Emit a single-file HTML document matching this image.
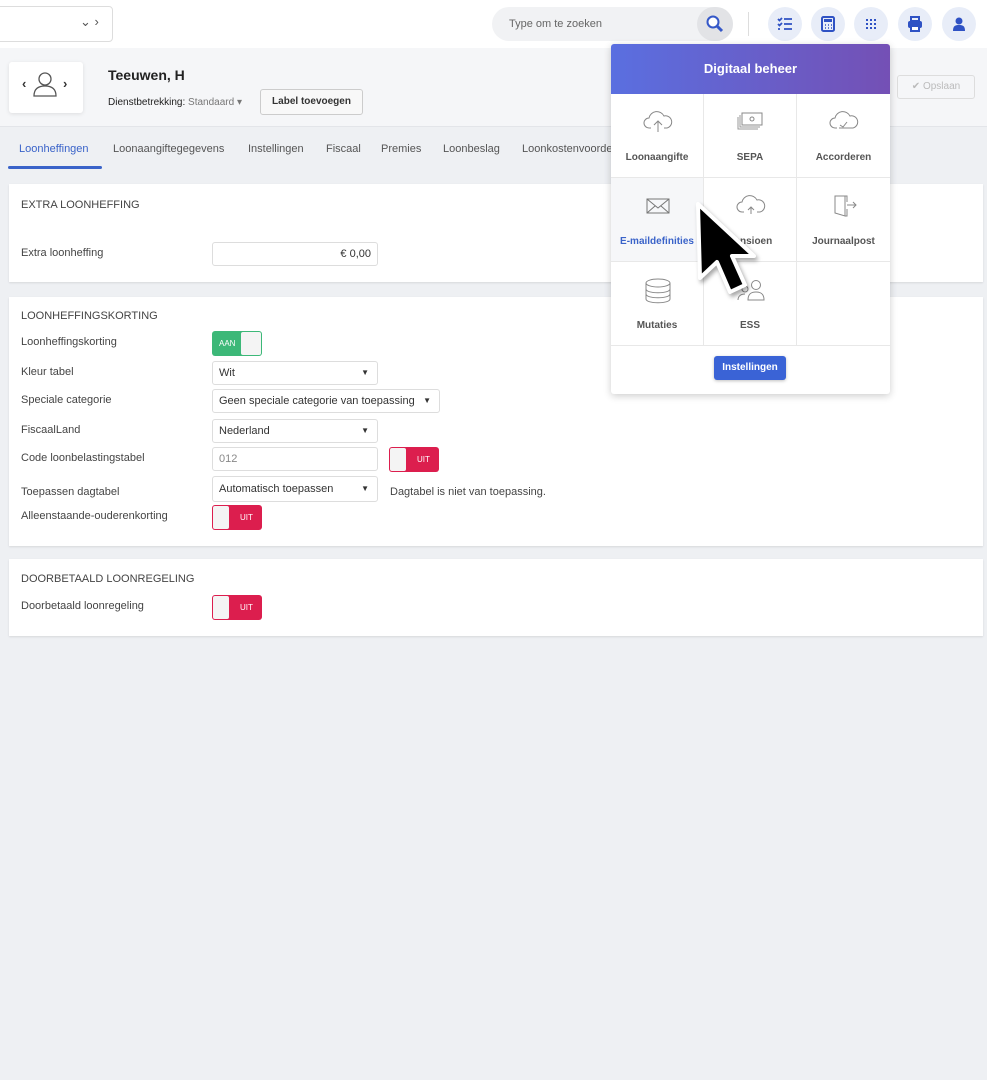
<!DOCTYPE html>
<html><head><meta charset="utf-8"><style>
*{box-sizing:border-box;margin:0;padding:0}
body{width:987px;height:1080px;background:#eef0f3;font-family:"Liberation Sans",sans-serif;color:#333;position:relative;overflow:hidden;font-size:11px}
.a{position:absolute}
.top{left:0;top:0;width:987px;height:48px;background:#fff;box-shadow:0 2px 4px rgba(0,0,0,.08)}
.circ{width:34px;height:34px;border-radius:50%;background:#e8edf8;top:7px;display:flex;align-items:center;justify-content:center}
.card{background:#fff;left:9px;width:974px;box-shadow:0 1px 2px rgba(0,0,0,.1)}
.lbl{left:21px;font-size:11px;color:#444}
.inp{left:212px;height:24px;border:1px solid #ddd;border-radius:3px;background:#fff;font-size:11px;color:#333;padding:0 6px;line-height:22px}
.sel:after{content:"▼";position:absolute;right:8px;top:0;font-size:8px;color:#333}
.tg{width:50px;height:25px;border-radius:3px}
.on{background:#3cb878;color:#fff;font-size:8px}
.on span{position:absolute;left:7px;top:8px}
.on i{position:absolute;right:1px;top:1px;width:20px;height:23px;background:#f4f4f4;border-radius:2px}
.off{background:#dc1e4e;color:#fff;font-size:8px}
.off span{position:absolute;left:28px;top:8px}
.off i{position:absolute;left:1px;top:1px;width:16px;height:23px;background:#f4f4f4;border-radius:2px}
.h{left:21px;font-size:11px;color:#444}
.cell{width:93px;height:84px;border-right:1px solid #e8e8e8;border-bottom:1px solid #e8e8e8;text-align:center}
.cell b{position:absolute;left:0;right:0;top:58px;font-size:10px;color:#555;font-weight:bold}
.cell svg{position:absolute;left:32px;top:16px}
</style></head><body>
<div class="a top"></div>
<div class="a" style="left:-5px;top:6px;width:118px;height:36px;border:1px solid #ddd;border-radius:4px;background:#fff"></div>
<div class="a" style="left:80px;top:14px;font-size:13px;color:#555">⌄ ›</div>
<div class="a" style="left:492px;top:7px;width:241px;height:34px;border-radius:17px;background:#f1f2f4"></div>
<div class="a" style="left:509px;top:18px;font-size:11px;color:#666">Type om te zoeken</div>
<div class="a" style="left:697px;top:7px;width:36px;height:34px;border-radius:17px;background:#e2e3e6"></div>
<svg class="a" style="left:705px;top:14px" width="20" height="20"><circle cx="8" cy="8" r="5.5" fill="#fff" stroke="#3558c8" stroke-width="2"/><path d="M12 12l5 5" stroke="#3558c8" stroke-width="3"/></svg>
<div class="a" style="left:748px;top:12px;width:1px;height:24px;background:#ddd"></div>
<div class="a circ" style="left:768px"><svg width="16" height="14"><path d="M1 2l1.5 1.5L5 1M1 7l1.5 1.5L5 6M1 12h2M7 2h8M7 7h8M7 12h8" stroke="#2f52c4" stroke-width="1.8" fill="none"/></svg></div>
<div class="a circ" style="left:811px"><svg width="14" height="16"><rect x="1" y="1" width="12" height="14" rx="1.5" fill="none" stroke="#2f52c4" stroke-width="2"/><rect x="3" y="3" width="8" height="3" fill="#2f52c4"/><path d="M4 9h1M7 9h1M10 9h1M4 12h1M7 12h1M10 12h1" stroke="#2f52c4" stroke-width="1.5"/></svg></div>
<div class="a circ" style="left:854px"><svg width="10" height="10" fill="#2f52c4"><rect x="0" y="0" width="2" height="2"/><rect x="4" y="0" width="2" height="2"/><rect x="8" y="0" width="2" height="2"/><rect x="0" y="4" width="2" height="2"/><rect x="4" y="4" width="2" height="2"/><rect x="8" y="4" width="2" height="2"/><rect x="0" y="8" width="2" height="2"/><rect x="4" y="8" width="2" height="2"/><rect x="8" y="8" width="2" height="2"/></svg></div>
<div class="a circ" style="left:898px"><svg width="16" height="16"><rect x="4" y="1" width="8" height="4" fill="none" stroke="#2f52c4" stroke-width="2"/><rect x="1" y="5" width="14" height="7" rx="2" fill="#2f52c4"/><rect x="4" y="10" width="8" height="5" fill="#fff" stroke="#2f52c4" stroke-width="2"/></svg></div>
<div class="a circ" style="left:942px"><svg width="12" height="14" fill="#2f52c4"><circle cx="6" cy="4" r="3.5"/><path d="M0 14c0-5 2-6 6-6s6 1 6 6z"/></svg></div>

<div class="a" style="left:0;top:48px;width:987px;height:79px;background:#f5f6f8;border-bottom:1px solid #e3e5e9"></div>
<div class="a" style="left:9px;top:62px;width:74px;height:51px;background:#fff;border-radius:3px;box-shadow:0 1px 4px rgba(0,0,0,.1)"></div>
<div class="a" style="left:22px;top:76px;font-size:13px;font-weight:bold">‹</div>
<div class="a" style="left:63px;top:76px;font-size:13px;font-weight:bold">›</div>
<svg class="a" style="left:32px;top:70px" width="26" height="28"><circle cx="13" cy="9" r="6" fill="none" stroke="#555" stroke-width="1.3"/><path d="M2 26c0-7 4-10 11-10s11 3 11 10z" fill="none" stroke="#555" stroke-width="1.3"/></svg>
<div class="a" style="left:108px;top:67px;font-size:14px;font-weight:bold;color:#222">Teeuwen, H</div>
<div class="a" style="left:108px;top:97px;font-size:10px;color:#222">Dienstbetrekking: <span style="color:#777">Standaard ▾</span></div>
<div class="a" style="left:260px;top:89px;width:103px;height:26px;border:1px solid #ccc;border-radius:3px;background:#f8f8f8;font-size:10px;text-align:center;line-height:24px;color:#333;font-weight:bold">Label toevoegen</div>
<div class="a" style="left:897px;top:75px;width:78px;height:24px;border:1px solid #ddd;border-radius:3px;font-size:10px;color:#bbb;text-align:center;line-height:22px">✔ Opslaan</div>

<div class="a" style="top:143px;left:19px;font-size:11px;color:#3a63c9">Loonheffingen</div>
<div class="a" style="top:143px;left:113px;font-size:11px;color:#555">Loonaangiftegegevens</div>
<div class="a" style="top:143px;left:248px;font-size:11px;color:#555">Instellingen</div>
<div class="a" style="top:143px;left:326px;font-size:11px;color:#555">Fiscaal</div>
<div class="a" style="top:143px;left:381px;font-size:11px;color:#555">Premies</div>
<div class="a" style="top:143px;left:443px;font-size:11px;color:#555">Loonbeslag</div>
<div class="a" style="top:143px;left:522px;font-size:11px;color:#555">Loonkostenvoordelen</div>
<div class="a" style="top:166px;left:8px;width:94px;height:3px;background:#3a63c9;border-radius:2px"></div>

<div class="a card" style="top:184px;height:98px"></div>
<div class="a h" style="top:199px">EXTRA LOONHEFFING</div>
<div class="a lbl" style="top:247px">Extra loonheffing</div>
<div class="a inp" style="top:242px;width:166px;text-align:right">€ 0,00</div>

<div class="a card" style="top:297px;height:249px"></div>
<div class="a h" style="top:310px">LOONHEFFINGSKORTING</div>
<div class="a lbl" style="top:336px">Loonheffingskorting</div>
<div class="a tg on" style="left:212px;top:331px"><span>AAN</span><i></i></div>
<div class="a lbl" style="top:366px">Kleur tabel</div>
<div class="a inp sel" style="top:361px;width:166px">Wit</div>
<div class="a lbl" style="top:394px">Speciale categorie</div>
<div class="a inp sel" style="top:389px;width:228px">Geen speciale categorie van toepassing</div>
<div class="a lbl" style="top:424px">FiscaalLand</div>
<div class="a inp sel" style="top:419px;width:166px">Nederland</div>
<div class="a lbl" style="top:452px">Code loonbelastingstabel</div>
<div class="a inp" style="top:447px;width:166px;color:#888">012</div>
<div class="a tg off" style="left:389px;top:447px"><span>UIT</span><i></i></div>
<div class="a lbl" style="top:486px">Toepassen dagtabel</div>
<div class="a inp sel" style="top:476px;width:166px;line-height:24px;height:26px">Automatisch toepassen</div>
<div class="a lbl" style="left:390px;top:486px">Dagtabel is niet van toepassing.</div>
<div class="a lbl" style="top:510px">Alleenstaande-ouderenkorting</div>
<div class="a tg off" style="left:212px;top:505px"><span>UIT</span><i></i></div>

<div class="a card" style="top:559px;height:77px"></div>
<div class="a h" style="top:573px">DOORBETAALD LOONREGELING</div>
<div class="a lbl" style="top:600px">Doorbetaald loonregeling</div>
<div class="a tg off" style="left:212px;top:595px"><span>UIT</span><i></i></div>

<div class="a" style="left:611px;top:44px;width:279px;height:350px;background:#fff;border-radius:3px;box-shadow:0 2px 8px rgba(0,0,0,.2);overflow:hidden">
 <div class="a" style="left:0;top:0;width:279px;height:50px;background:linear-gradient(90deg,#5a6fe0,#7450b5);color:#fff;font-weight:bold;font-size:13px;text-align:center;line-height:50px">Digitaal beheer</div>
 <div class="a cell" style="left:0;top:50px"><svg width="30" height="24"><path d="M8 18h-2a5 5 0 0 1 0-10a8 8 0 0 1 15-2a6 6 0 0 1 3 12h-3M15 22v-11M11 15l4-4l4 4" fill="none" stroke="#888" stroke-width="1"/></svg><b>Loonaangifte</b></div>
 <div class="a cell" style="left:93px;top:50px"><svg width="30" height="24"><rect x="6" y="3" width="20" height="12" fill="none" stroke="#888"/><circle cx="16" cy="9" r="2" fill="none" stroke="#888"/><path d="M4 5v12h20M2 7v12h20" fill="none" stroke="#999"/></svg><b>SEPA</b></div>
 <div class="a cell" style="left:186px;top:50px;border-right:none"><svg width="30" height="24"><path d="M8 18h-2a5 5 0 0 1 0-10a8 8 0 0 1 15-2a6 6 0 0 1 3 12h-14M11 15l3 2l4-5" fill="none" stroke="#888" stroke-width="1"/></svg><b>Accorderen</b></div>
 <div class="a cell" style="left:0;top:134px;background:#f6f7f9"><svg width="30" height="24"><rect x="4" y="5" width="22" height="14" fill="none" stroke="#777"/><path d="M4 5l11 9l11-9M4 19l8-7M26 19l-8-7" fill="none" stroke="#777"/></svg><b style="color:#3a63c9">E-maildefinities</b></div>
 <div class="a cell" style="left:93px;top:134px"><svg width="30" height="24"><path d="M8 18h-2a5 5 0 0 1 0-10a8 8 0 0 1 15-2a6 6 0 0 1 3 12h-3M15 20v-7M12 16l3-3l3 3" fill="none" stroke="#888"/></svg><b>Pensioen</b></div>
 <div class="a cell" style="left:186px;top:134px;border-right:none"><svg width="30" height="24"><path d="M6 2h10v20l-10-3zM16 2v0M18 11h9M24 8l3 3l-3 3M16 2h2v6M16 22h2v-7" fill="none" stroke="#888"/></svg><b>Journaalpost</b></div>
 <div class="a cell" style="left:0;top:218px"><svg width="30" height="26"><ellipse cx="15" cy="5" rx="12" ry="4" fill="none" stroke="#888"/><path d="M3 5v16c0 5 24 5 24 0V5M3 11c0 5 24 5 24 0M3 16c0 5 24 5 24 0" fill="none" stroke="#888"/></svg><b>Mutaties</b></div>
 <div class="a cell" style="left:93px;top:218px"><svg width="30" height="24"><circle cx="20" cy="7" r="4.5" fill="none" stroke="#888"/><path d="M12 22c0-6 3-8 8-8s8 2 8 8z" fill="none" stroke="#888"/><circle cx="9" cy="11" r="3" fill="none" stroke="#888"/><path d="M2 22c0-4 3-6 7-6" fill="none" stroke="#888"/></svg><b>ESS</b></div>
 <div class="a cell" style="left:186px;top:218px;border-right:none"></div>
 <div class="a" style="left:103px;top:312px;width:72px;height:24px;background:#3a63d6;border-radius:3px;color:#fff;font-size:10px;font-weight:bold;text-align:center;line-height:24px;box-shadow:0 1px 3px rgba(0,0,0,.25)">Instellingen</div>
</div>
<svg class="a" style="left:690px;top:196px" width="80" height="110"><path d="M8 8L10 82L27 66L40 96L55 89L42 60L64 60Z" fill="#000" stroke="#fff" stroke-width="4" stroke-linejoin="round" style="filter:drop-shadow(2px 3px 2px rgba(0,0,0,.35))"/></svg>
</body></html>
